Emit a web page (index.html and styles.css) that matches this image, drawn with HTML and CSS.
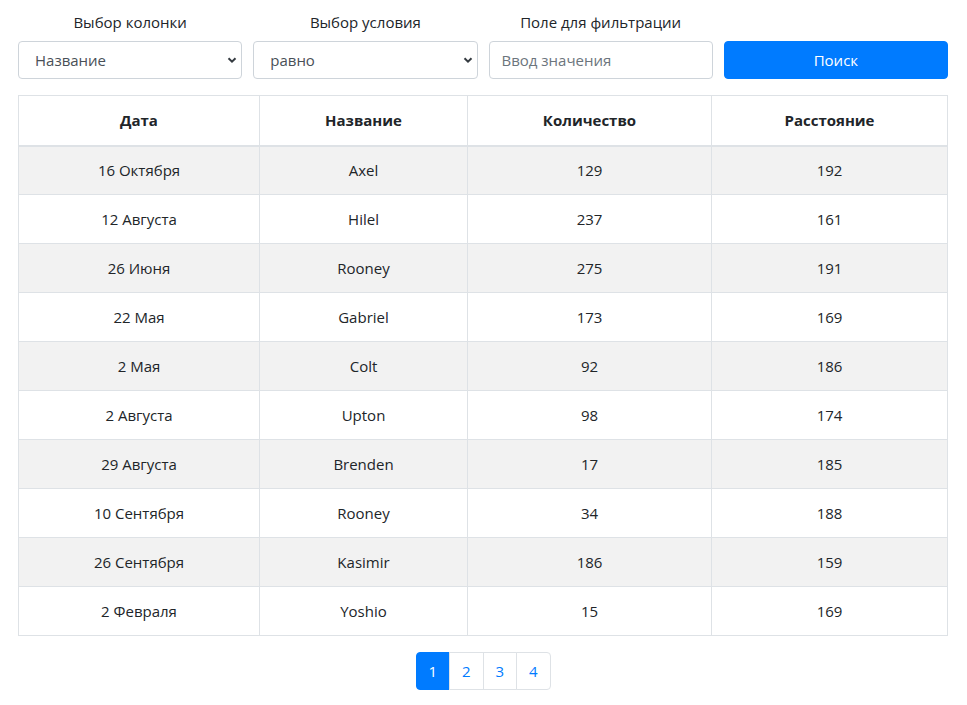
FILE: index.html
```html
<!DOCTYPE html>
<html lang="ru">
<head>
<meta charset="utf-8">
<title>Таблица</title>
<link rel="stylesheet" href="styles.css">
</head>
<body>
<div class="page">
  <div class="filters">
    <div class="field">
      <label class="field-label">Выбор колонки</label>
      <div class="select-wrap">
        <select class="control select"><option>Название</option></select>
        <svg class="chevron" width="10" height="8" viewBox="0 0 10 8"><path d="M1.5 2.2 L5 5.6 L8.5 2.2" fill="none" stroke="#343a40" stroke-width="2"/></svg>
      </div>
    </div>
    <div class="field">
      <label class="field-label">Выбор условия</label>
      <div class="select-wrap">
        <select class="control select"><option>равно</option></select>
        <svg class="chevron" width="10" height="8" viewBox="0 0 10 8"><path d="M1.5 2.2 L5 5.6 L8.5 2.2" fill="none" stroke="#343a40" stroke-width="2"/></svg>
      </div>
    </div>
    <div class="field">
      <label class="field-label">Поле для фильтрации</label>
      <input class="control input" type="text" placeholder="Ввод значения">
    </div>
    <div class="field">
      <span class="field-label">&nbsp;</span>
      <button class="btn">Поиск</button>
    </div>
  </div>

  <table class="data">
    <colgroup>
      <col class="c1"><col class="c2"><col class="c3"><col class="c4">
    </colgroup>
    <thead>
      <tr><th>Дата</th><th>Название</th><th>Количество</th><th>Расстояние</th></tr>
    </thead>
    <tbody>
      <tr><td>16 Октября</td><td>Axel</td><td>129</td><td>192</td></tr>
      <tr><td>12 Августа</td><td>Hilel</td><td>237</td><td>161</td></tr>
      <tr><td>26 Июня</td><td>Rooney</td><td>275</td><td>191</td></tr>
      <tr><td>22 Мая</td><td>Gabriel</td><td>173</td><td>169</td></tr>
      <tr><td>2 Мая</td><td>Colt</td><td>92</td><td>186</td></tr>
      <tr><td>2 Августа</td><td>Upton</td><td>98</td><td>174</td></tr>
      <tr><td>29 Августа</td><td>Brenden</td><td>17</td><td>185</td></tr>
      <tr><td>10 Сентября</td><td>Rooney</td><td>34</td><td>188</td></tr>
      <tr><td>26 Сентября</td><td>Kasimir</td><td>186</td><td>159</td></tr>
      <tr><td>2 Февраля</td><td>Yoshio</td><td>15</td><td>169</td></tr>
    </tbody>
  </table>

  <nav class="pager">
    <a class="page-link active">1</a>
    <a class="page-link">2</a>
    <a class="page-link">3</a>
    <a class="page-link">4</a>
  </nav>
</div>
</body>
</html>
```

FILE: styles.css
```css
* { box-sizing: border-box; }
body {
  margin: 0;
  background: #fff;
  color: #212529;
  font-family: "Open Sans", "Noto Sans", sans-serif;
  font-size: 15px;
  line-height: 1.5;
}
.page {
  padding: 10px 19px 0 18px;
}
.filters {
  display: grid;
  grid-template-columns: repeat(4, 1fr);
  column-gap: 11px;
}
.field {
  display: flex;
  flex-direction: column;
}
.field-label {
  text-align: center;
  height: 24px;
  line-height: 24px;
  margin-bottom: 7px;
  font-size: 15px;
}
.select-wrap {
  position: relative;
}
.control {
  width: 100%;
  height: 38px;
  border: 1px solid #ced4da;
  border-radius: 4px;
  background: #fff;
  font-family: inherit;
  font-size: 15px;
  color: #495057;
}
.select {
  appearance: none;
  -webkit-appearance: none;
  padding: 0 28px 0 16px;
}
.chevron {
  position: absolute;
  right: 5px;
  top: 15px;
  pointer-events: none;
}
.input {
  padding: 0 12px;
}
.input::placeholder { color: #6c757d; }
.btn {
  height: 38px;
  border: 1px solid #007bff;
  background: #007bff;
  color: #fff;
  border-radius: 4px;
  font-family: inherit;
  font-size: 15px;
}
.data {
  width: 100%;
  margin-top: 16px;
  border-collapse: collapse;
  text-align: center;
}
.c1 { width: 241px; }
.c2 { width: 208px; }
.c3 { width: 244px; }
.c4 { width: 236px; }
.data th, .data td {
  border: 1px solid #dee2e6;
  height: 49px;
  padding: 0 12px;
  vertical-align: middle;
}
.data th {
  font-weight: 700;
  height: 50px;
  border-bottom: 2px solid #dee2e6;
}
.data tbody tr:nth-child(odd) { background: #f2f2f2; }
.pager {
  display: flex;
  justify-content: center;
  margin-top: 16px;
}
.page-link {
  width: 34.5px;
  height: 38px;
  display: flex;
  align-items: center;
  justify-content: center;
  border: 1px solid #dee2e6;
  margin-left: -1px;
  color: #007bff;
  background: #fff;
  font-size: 15px;
}
.page-link:first-child {
  margin-left: 0;
  border-radius: 4px 0 0 4px;
}
.page-link:last-child { border-radius: 0 4px 4px 0; }
.page-link.active {
  background: #007bff;
  border-color: #007bff;
  color: #fff;
}
```
